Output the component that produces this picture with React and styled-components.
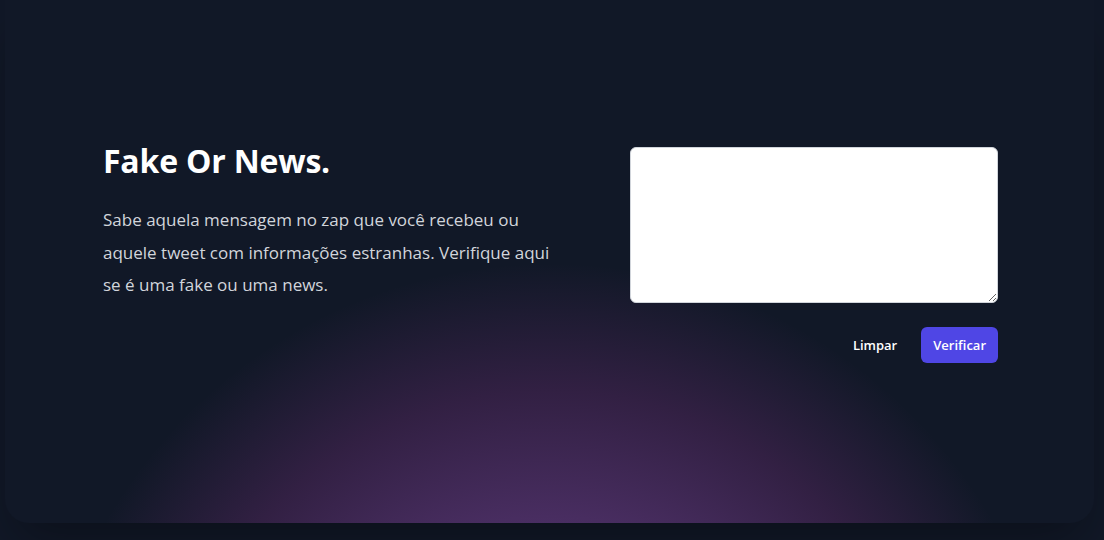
import React from "react";
import styled, { createGlobalStyle } from "styled-components";

const Global = createGlobalStyle`
  html, body { margin: 0; padding: 0; background: #111827; }
  body { font-family: "Open Sans", "Noto Sans", sans-serif; -webkit-font-smoothing: antialiased; }
  * { box-sizing: border-box; }
`;

const Page = styled.div`
  width: 1104px;
  height: 540px;
  overflow: hidden;
  background: #111827;
  padding: 0 10px 0 5px;
`;

const Card = styled.section`
  height: 523px;
  border-radius: 0 0 24px 24px;
  box-shadow: 0 25px 50px -12px rgba(0, 0, 0, 0.35);
  background:
    radial-gradient(
      circle 512px at 50% calc(100% + 252px),
      rgba(119, 117, 214, 0.7) 0%,
      rgba(147, 101, 209, 0.525) 25%,
      rgba(176, 85, 204, 0.35) 50%,
      rgba(204, 69, 198, 0.175) 75%,
      rgba(233, 53, 193, 0) 100%
    ),
    #111827;
  padding: 138px 96px 0 98px;
  display: grid;
  grid-template-columns: 1fr 368px;
  align-items: start;
`;

const TextCol = styled.div`
  max-width: 448px;
  padding-top: 4px;
`;

const Title = styled.h1`
  margin: 0;
  font-size: 32px;
  line-height: 38px;
  font-weight: 700;
  letter-spacing: -0.2px;
  color: #ffffff;
`;

const Lead = styled.p`
  margin: 24px 0 0;
  font-size: 17px;
  line-height: 32.5px;
  color: #d1d5db;
`;

const FormCol = styled.div`
  padding-top: 9px;
  display: flex;
  flex-direction: column;
`;

const Input = styled.textarea`
  width: 368px;
  height: 156px;
  border: 1px solid #d1d5db;
  border-radius: 6px;
  background: #ffffff;
  padding: 8px 12px;
  font-family: inherit;
  font-size: 14px;
  outline: none;
`;

const Actions = styled.div`
  margin-top: 24px;
  display: flex;
  justify-content: flex-end;
  align-items: center;
  gap: 24px;
`;

const Button = styled.button`
  font-family: inherit;
  font-size: 13px;
  font-weight: 600;
  line-height: 20px;
  color: #ffffff;
  border: none;
  cursor: pointer;
  border-radius: 6px;
  background: ${(p) => (p.$primary ? "#4f46e5" : "transparent")};
  padding: ${(p) => (p.$primary ? "8px 12px" : "8px 0")};
  height: 36px;
`;

export default function App() {
  return (
    <>
      <Global />
      <Page>
        <Card>
          <TextCol>
            <Title>Fake Or News.</Title>
            <Lead>
              Sabe aquela mensagem no zap que você recebeu ou aquele tweet com
              informações estranhas. Verifique aqui se é uma fake ou uma news.
            </Lead>
          </TextCol>
          <FormCol>
            <Input />
            <Actions>
              <Button>Limpar</Button>
              <Button $primary>Verificar</Button>
            </Actions>
          </FormCol>
        </Card>
      </Page>
    </>
  );
}
